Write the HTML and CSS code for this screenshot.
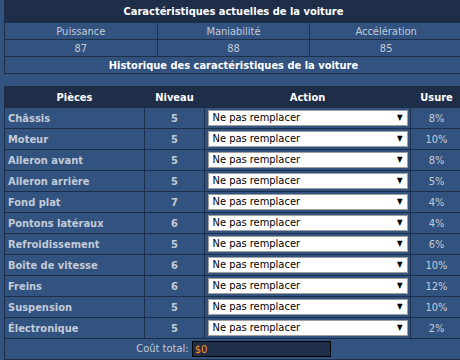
FILE: index.html
```html
<!DOCTYPE html>
<html lang="fr">
<head>
    <meta charset="UTF-8">
    <title>Voiture</title>
    <link rel="stylesheet" href="styles.css">
</head>
<body>
<div class="page">
    <table class="stats">
        <tr>
            <th class="title" colspan="3">Caractéristiques actuelles de la voiture</th>
        </tr>
        <tr>
            <td>Puissance</td>
            <td>Maniabilité</td>
            <td>Accélération</td>
        </tr>
        <tr>
            <td>87</td>
            <td>88</td>
            <td>85</td>
        </tr>
        <tr>
            <th colspan="3">Historique des caractéristiques de la voiture</th>
        </tr>
    </table>

    <table class="parts">
        <colgroup>
            <col class="col-name">
            <col class="col-level">
            <col class="col-action">
            <col class="col-wear">
        </colgroup>
        <tr class="head">
            <th>Pièces</th>
            <th>Niveau</th>
            <th>Action</th>
            <th>Usure</th>
        </tr>
        <tr>
            <td class="name">Châssis</td>
            <td class="level">5</td>
            <td class="action"><span class="choice"><select><option>Ne pas remplacer</option></select></span></td>
            <td class="wear">8%</td>
        </tr>
        <tr>
            <td class="name">Moteur</td>
            <td class="level">5</td>
            <td class="action"><span class="choice"><select><option>Ne pas remplacer</option></select></span></td>
            <td class="wear">10%</td>
        </tr>
        <tr>
            <td class="name">Aileron avant</td>
            <td class="level">5</td>
            <td class="action"><span class="choice"><select><option>Ne pas remplacer</option></select></span></td>
            <td class="wear">8%</td>
        </tr>
        <tr>
            <td class="name">Aileron arrière</td>
            <td class="level">5</td>
            <td class="action"><span class="choice"><select><option>Ne pas remplacer</option></select></span></td>
            <td class="wear">5%</td>
        </tr>
        <tr>
            <td class="name">Fond plat</td>
            <td class="level">7</td>
            <td class="action"><span class="choice"><select><option>Ne pas remplacer</option></select></span></td>
            <td class="wear">4%</td>
        </tr>
        <tr>
            <td class="name">Pontons latéraux</td>
            <td class="level">6</td>
            <td class="action"><span class="choice"><select><option>Ne pas remplacer</option></select></span></td>
            <td class="wear">4%</td>
        </tr>
        <tr>
            <td class="name">Refroidissement</td>
            <td class="level">5</td>
            <td class="action"><span class="choice"><select><option>Ne pas remplacer</option></select></span></td>
            <td class="wear">6%</td>
        </tr>
        <tr>
            <td class="name">Boîte de vitesse</td>
            <td class="level">6</td>
            <td class="action"><span class="choice"><select><option>Ne pas remplacer</option></select></span></td>
            <td class="wear">10%</td>
        </tr>
        <tr>
            <td class="name">Freins</td>
            <td class="level">6</td>
            <td class="action"><span class="choice"><select><option>Ne pas remplacer</option></select></span></td>
            <td class="wear">12%</td>
        </tr>
        <tr>
            <td class="name">Suspension</td>
            <td class="level">5</td>
            <td class="action"><span class="choice"><select><option>Ne pas remplacer</option></select></span></td>
            <td class="wear">10%</td>
        </tr>
        <tr>
            <td class="name">Électronique</td>
            <td class="level">5</td>
            <td class="action"><span class="choice"><select><option>Ne pas remplacer</option></select></span></td>
            <td class="wear">2%</td>
        </tr>
        <tr>
            <td class="total" colspan="4">Coût total: <input class="cost" type="text" value="$0" readonly></td>
        </tr>
    </table>
</div>
</body>
</html>
```

FILE: styles.css
```css
html {
    overflow: hidden;
}
body {
    margin: 0;
    background-color: #325380;
    font-family: "DejaVu Sans Condensed", "DejaVu Sans", sans-serif;
    font-size: 11px;
    color: #c3cbd8;
}
.page {
    width: 470px;
    padding-left: 4px;
}
table {
    border-collapse: collapse;
    width: 459px;
}
td, th {
    border: 1px solid #1e2d48;
    padding: 0;
}
th {
    color: #ffffff;
    font-weight: bold;
}
.stats td,
.stats th {
    height: 16px;
    text-align: center;
    width: 33.3%;
}
.stats .title {
    height: 21px;
    background-color: #1e2d48;
}
.parts {
    margin-top: 12px;
    table-layout: fixed;
}
.col-name {
    width: 140px;
}
.col-level {
    width: 60px;
}
.col-action {
    width: 206px;
}
.parts td,
.parts th {
    height: 20px;
}
.parts .head th {
    background-color: #1e2d48;
}
.name {
    font-weight: bold;
    padding-left: 3px;
}
.level {
    font-weight: bold;
    text-align: center;
}
.wear {
    text-align: center;
}
.action {
    text-align: center;
    line-height: 0;
}
.choice {
    position: relative;
    display: inline-block;
}
.choice select {
    -webkit-appearance: none;
    appearance: none;
    width: 200px;
    height: 16px;
    margin: 0;
    padding: 0 0 0 4px;
    border: 1px solid #a0a0a0;
    border-radius: 0;
    background-color: #ffffff;
    color: #000000;
    font-family: "DejaVu Sans Condensed", "DejaVu Sans", sans-serif;
    font-size: 11px;
    line-height: 14px;
}
.choice::after {
    content: "▼";
    position: absolute;
    right: 5px;
    top: 3px;
    font-size: 8px;
    line-height: 10px;
    color: #000000;
    pointer-events: none;
}
.total {
    text-align: center;
}
.cost {
    width: 139px;
    height: 16px;
    box-sizing: border-box;
    margin: 0;
    padding: 0 0 0 2px;
    border: 1px solid #000000;
    background-color: #1e2d48;
    color: #ff9c00;
    font-family: "DejaVu Sans Condensed", "DejaVu Sans", sans-serif;
    font-size: 11px;
    vertical-align: middle;
}
```
